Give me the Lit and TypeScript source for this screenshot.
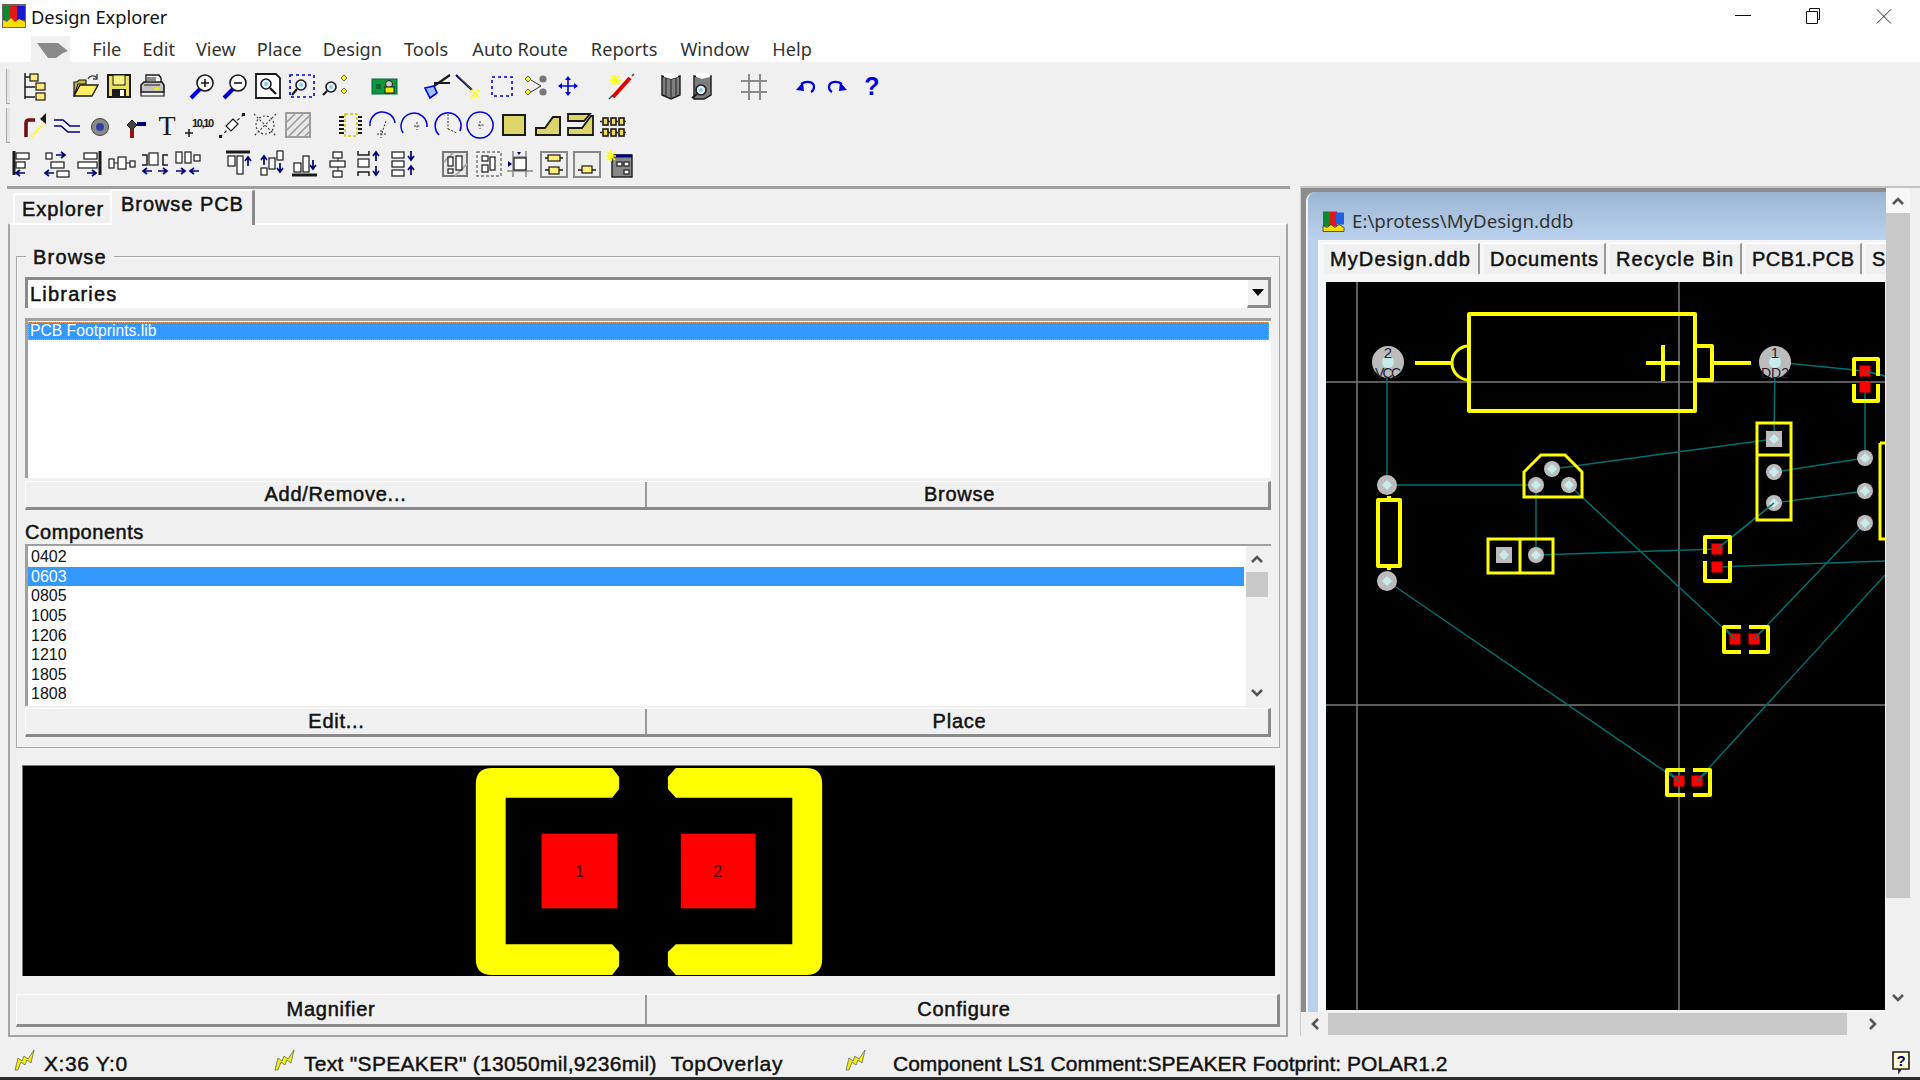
import { LitElement, html, css, svg } from "lit";
import { customElement } from "lit/decorators.js";

const Y = "#ffff00";
const BLUE = "#0000e0";
const NAVY = "#00007b";
const INK = "#1a1a1a";

// toolbar glyphs, all in a 28x28 box
const lens = (x: number, y: number, r = 6) => svg`<circle cx=${x} cy=${y} r=${r} fill="#eef" stroke=${INK} stroke-width="1.6"/><circle cx=${x} cy=${y} r=${r - 3} fill="#7cd6d6"/>`;
const chip = (x: number, y: number, w: number, h: number, f = "#fff") => svg`<rect x=${x} y=${y} width=${w} height=${h} fill=${f} stroke=${INK} stroke-width="1.2"/>`;
const arrowL = (x: number, y: number, c = NAVY) => svg`<path d="M${x} ${y}h9M${x + 4} ${y - 3}l-4 3 4 3" fill="none" stroke=${c} stroke-width="1.7"/>`;
const arrowR = (x: number, y: number, c = NAVY) => svg`<path d="M${x} ${y}h9M${x + 5} ${y - 3}l4 3-4 3" fill="none" stroke=${c} stroke-width="1.7"/>`;
const arrowU = (x: number, y: number, c = NAVY) => svg`<path d="M${x} ${y}v9M${x - 3} ${y + 4}l3-4 3 4" fill="none" stroke=${c} stroke-width="1.7"/>`;
const arrowD = (x: number, y: number, c = NAVY) => svg`<path d="M${x} ${y}v9M${x - 3} ${y + 5}l3 4 3-4" fill="none" stroke=${c} stroke-width="1.7"/>`;
const arc = (d: string, m: string) => svg`<path d=${d} fill="none" stroke=${BLUE} stroke-width="1.5"/><path d=${m} fill="none" stroke="#333" stroke-width="1" stroke-dasharray="2 1.5"/>`;

const ICONS: Record<string, unknown> = {
  tree: svg`<path d="M4 1v26M4 5h6M4 15h10M4 25h10" stroke=${INK} stroke-width="1.5" fill="none"/>${chip(9, 2, 8, 7, "#ffe97a")}${chip(15, 11, 9, 7, "#ffe97a")}${chip(15, 21, 9, 7, "#ffe97a")}`,
  open: svg`<path d="M2 24V10h3l2-2h7v4h-8z" fill="#c9b53a" stroke=${INK} stroke-width="1.2"/><path d="M2 24l6-11h18l-6 11z" fill="#ffee66" stroke=${INK} stroke-width="1.4"/><path d="M16 7c2-4 7-4 9-1M25 2v5h-4" fill="none" stroke="#444" stroke-width="1.4"/>`,
  save: svg`<rect x="3" y="3" width="22" height="22" fill="#e8e060" stroke=${INK} stroke-width="2"/><rect x="8" y="3" width="12" height="10" fill="#f5f080" stroke=${INK} stroke-width="1"/><rect x="7" y="17" width="14" height="8" fill=${INK}/><rect x="15" y="18" width="4" height="6" fill="#fff"/>`,
  print: svg`<path d="M8 10V3h13l2 3v4" fill="#fff" stroke=${INK} stroke-width="1.4"/><path d="M3 20v-7l3-3h18l2 3v7z" fill="#c4c4c4" stroke=${INK} stroke-width="1.6"/><path d="M3 20v4h23v-4M6 13h16M9 6h9M9 8h9" stroke=${INK} fill="none" stroke-width="1.2"/><rect x="16" y="16" width="5" height="2" fill="#ee0"/>`,
  zin: svg`<path d="M3 26l9-9" stroke=${BLUE} stroke-width="4"/><circle cx="17" cy="11" r="8" fill="#fff" stroke=${INK} stroke-width="1.6"/><path d="M13 11h8M17 7v8" stroke=${INK} stroke-width="1.6"/>`,
  zout: svg`<path d="M3 26l9-9" stroke=${BLUE} stroke-width="4"/><circle cx="17" cy="11" r="8" fill="#fff" stroke=${INK} stroke-width="1.6"/><path d="M13 11h8" stroke=${INK} stroke-width="1.6"/>`,
  zfit: svg`<path d="M2 2h20l4 4v20H2z" fill="#fff" stroke=${INK} stroke-width="1.8"/>${lens(12, 12, 5)}<path d="M16 16l6 6" stroke=${INK} stroke-width="2.4"/>`,
  zarea: svg`<rect x="2" y="3" width="24" height="22" fill="none" stroke=${BLUE} stroke-width="1.6" stroke-dasharray="3 3"/>${lens(13, 13, 5)}<path d="M9 17l-5 6" stroke=${INK} stroke-width="2.2"/>`,
  zsel: svg`${lens(10, 15, 5)}<path d="M6 19l-4 4" stroke=${INK} stroke-width="2.2"/><path d="M23 3l3 3-3 3-3-3zM23 16l3 3-3 3-3-3z" fill=${Y} stroke="#666" stroke-width="1"/>`,
  board: svg`<rect x="1" y="7" width="25" height="15" fill="#0a9a3a" stroke="#064" stroke-width="1"/><rect x="5" y="12" width="5" height="5" fill="#163"/><circle cx="18" cy="12" r="3.5" fill="#ccc" stroke=${INK}/><rect x="14" y="15" width="9" height="6" fill="#ee0" stroke=${INK}/>`,
  cut: svg`<path d="M27 3L11 14M27 11H11" stroke=${INK} stroke-width="2.2"/><path d="M2 16l9-2 3 7-7 5z" fill="#9bc0ff" stroke=${BLUE} stroke-width="1.6"/>`,
  wiper: svg`<path d="M3 3l16 15" stroke="#00007b" stroke-width="2.2"/><path d="M5 4l13 13" stroke="#555" stroke-width="1"/><path d="M18 18l8 8M26 18l-8 8" stroke=${Y} stroke-width="3" stroke-dasharray="2 1.5"/>`,
  rect: svg`<rect x="4" y="5" width="20" height="19" fill="none" stroke=${BLUE} stroke-width="1.6" stroke-dasharray="3 3"/>`,
  deselect: svg`<path d="M9 8l10 6-10 6" fill="none" stroke="#333" stroke-width="1"/><path d="M6 4l3 3-3 3-3-3zM6 17l3 3-3 3-3-3z" fill=${Y} stroke="#666"/><circle cx="21" cy="7" r="3.6" fill="#777"/><circle cx="21" cy="20" r="3.6" fill="#777"/>`,
  move: svg`<path d="M14 5v18M5 14h18" stroke=${BLUE} stroke-width="1.6"/><path d="M14 4l-3 4h6zM14 24l-3-4h6zM4 14l4-3v6zM24 14l-4-3v6z" fill=${BLUE}/>`,
  wand: svg`<path d="M7 25L24 6" stroke="#e00000" stroke-width="4"/><path d="M3 27l4-4M26 4l2-2" stroke="#444" stroke-width="1.5"/><path d="M9 3v10M3 8h12M5 4l8 8M13 4l-8 8" stroke=${Y} stroke-width="1.7"/>`,
  book: svg`<path d="M5 4l9 3 9-3v19l-9 4-9-4z" fill="#7e7e7e" stroke=${INK} stroke-width="1.4"/><path d="M14 7v20M9 6v18M19 6v18" stroke="#333" stroke-width="1.2"/><path d="M7 1h14v4l-7 2-7-2z" fill="#fff"/>`,
  bookz: svg`<path d="M6 4l8 2 9-2v19l-7 4H6z" fill="#7e7e7e" stroke=${INK} stroke-width="1.4"/><path d="M8 1h14v4l-8 2-6-2z" fill="#fff"/>${lens(13, 18, 5)}<path d="M9 22l-5 4" stroke=${INK} stroke-width="2.2"/>`,
  grid: svg`<path d="M9 2v26M20 2v26M1 9h26M1 20h26" stroke="#8a8a8a" stroke-width="2"/>`,
  undo: svg`<path d="M10 12c6-4 13-2 13 3 0 2-1 4-3 5" fill="none" stroke=${BLUE} stroke-width="2.2"/><path d="M5 18l8 1-1-9z" fill=${BLUE}/>`,
  redo: svg`<path d="M18 12c-6-4-13-2-13 3 0 2 1 4 3 5" fill="none" stroke=${BLUE} stroke-width="2.2"/><path d="M23 18l-8 1 1-9z" fill=${BLUE}/>`,
  help: svg`<text x="14" y="23" text-anchor="middle" font-family="Liberation Sans" font-weight="700" font-size="25" fill=${BLUE}>?</text>`,
  wire: svg`<path d="M6 26V12q0-3 3-3h6" fill="none" stroke="#7b1010" stroke-width="3.6"/><path d="M6 26V12" stroke=${INK} stroke-width="1" stroke-dasharray="1 2"/><path d="M11 26L24 12" stroke=${Y} stroke-width="2.5" stroke-dasharray="2 1.5"/><path d="M26 2l-6 6 6 5z" fill=${INK}/>`,
  bus: svg`<path d="M1 9h9l7 6h10M1 15h7l7 6h12" fill="none" stroke=${NAVY} stroke-width="1.6"/>`,
  via: svg`<circle cx="14" cy="16" r="8.5" fill="#8a8a8a" stroke="#444" stroke-width="1"/><circle cx="14" cy="16" r="4" fill="#3040a0"/>`,
  pad: svg`<path d="M13 9l5 5-5 5-5-5z" fill="#444" stroke=${INK}/><path d="M18 13h9" stroke=${NAVY} stroke-width="4"/><path d="M13 18v9" stroke="#9a1010" stroke-width="4"/>`,
  text: svg`<text x="14" y="24" text-anchor="middle" font-family="Liberation Serif" font-size="28" fill=${INK}>T</text>`,
  coord: svg`<path d="M0 22h8M4 18v8" stroke=${INK} stroke-width="1.5"/><text x="7" y="16" font-family="Liberation Sans" font-weight="700" font-size="11" textLength="22" fill=${INK}>10,10</text>`,
  dim: svg`<path d="M2 26L26 3" stroke=${INK} stroke-width="1.2" stroke-dasharray="3 3"/><path d="M15 8l5 5-7 7-5-5z" fill="#fff" stroke=${INK} stroke-width="1.2"/><rect x="1" y="24" width="3" height="3" fill=${INK}/><rect x="24" y="2" width="3" height="3" fill=${INK}/>`,
  keep: svg`<circle cx="14" cy="14" r="9" fill="none" stroke="#444" stroke-width="1.2" stroke-dasharray="2 2"/><path d="M3 3l22 22M25 3L3 25" stroke="#444" stroke-width="1.2" stroke-dasharray="2 2"/>`,
  hatch: svg`<rect x="2" y="2" width="24" height="24" fill="#e8e8e8" stroke="#888" stroke-width="1.6"/><path d="M3 11l8-8M3 19L19 3M5 25L25 5M13 25l12-12M21 25l4-4" stroke="#999" stroke-width="1.6"/>`,
  ic: svg`<rect x="9" y="3" width="12" height="22" fill="none" stroke="#c8c800" stroke-width="1.5" stroke-dasharray="3 2"/><path d="M3 6h5M3 10h5M3 14h5M3 18h5M3 22h5M22 6h4M22 10h4M22 14h4M22 18h4M22 22h4" stroke=${INK} stroke-width="2"/>`,
  arc1: arc("M2 15A12 12 0 0 1 27 12", "M14 22L18 10M9 23h9M13 19v8"),
  arc2: arc("M2 22A13 13 0 1 1 26 16", "M13 15h6M16 11v8"),
  arc3: arc("M5 24A13 13 0 1 1 26 20", "M14 3v15M14 18l9 4"),
  arc4: arc("M14 1a13 13 0 1 0 .1 0", "M12 14h7M14 10v8"),
  fill: svg`<rect x="3" y="4" width="22" height="20" fill="#dcd66a" stroke=${INK} stroke-width="2"/>`,
  poly: svg`<path d="M2 24V17h9l8-11h7v18z" fill="#dcd66a" stroke=${INK} stroke-width="2"/>`,
  split: svg`<path d="M2 3h22l-6 7H2z" fill="#dcd66a" stroke=${INK} stroke-width="1.8"/><path d="M2 24v-7h14l9-12h2v19z" fill="#dcd66a" stroke=${INK} stroke-width="1.8"/>`,
  array: svg`${[7, 18].map((y) => [4, 12, 20].map((x) => svg`<rect x=${x} y=${y} width="5" height="7" fill="#eed860" stroke=${INK} stroke-width="1.6"/>`))}<path d="M1 10.500h26M1 21.500h26" stroke=${INK} stroke-width="1.400" stroke-dasharray="2 6"/>`,
  alL: svg`<path d="M3 1v24" stroke=${INK} stroke-width="3"/>${chip(5, 3, 13, 6)}${chip(5, 12, 9, 6)}${arrowL(5, 23)}`,
  alCH: svg`${chip(3, 3, 6, 6)}${chip(8, 12, 13, 6)}${chip(14, 21, 12, 6)}${arrowR(13, 5)}${arrowL(2, 23)}`,
  alR: svg`<path d="M25 1v24" stroke=${INK} stroke-width="3"/>${chip(9, 3, 13, 6)}${chip(3, 12, 19, 6)}${arrowR(12, 23)}`,
  spH: svg`${chip(1, 9, 5, 9)}${chip(10, 7, 8, 12)}${chip(22, 11, 5, 6)}<path d="M6 13h4M18 13h4" stroke=${INK}/>`,
  spHp: svg`${chip(8, 3, 9, 12)}<path d="M1 5h5v10H1M27 5h-5v10h5" fill="none" stroke=${INK} stroke-width="1.5"/>${arrowL(2, 21)}${arrowR(17, 21)}`,
  spHm: svg`${chip(2, 2, 6, 11)}${chip(11, 2, 6, 11)}${chip(20, 5, 6, 6)}${arrowR(2, 21)}${arrowL(16, 21)}`,
  alT: svg`<path d="M1 2h24" stroke=${INK} stroke-width="3"/>${chip(3, 6, 7, 10)}${chip(12, 6, 6, 18)}${arrowU(23, 7)}`,
  alCV: svg`${chip(19, 1, 6, 9)}${chip(11, 8, 6, 11)}${chip(3, 18, 6, 7)}${arrowU(6, 6)}${arrowD(22, 13)}`,
  alB: svg`<path d="M1 25h25" stroke=${INK} stroke-width="3"/>${chip(3, 13, 7, 9)}${chip(12, 6, 6, 16)}${arrowD(22, 10)}`,
  spV: svg`${chip(9, 2, 9, 6)}${chip(6, 11, 15, 6)}${chip(9, 21, 9, 6)}<path d="M14 8v3M14 17v4" stroke=${INK}/>`,
  spVp: svg`<path d="M2 1v4h11V1M2 26v-4h11v4" fill="none" stroke=${INK} stroke-width="1.5"/>${chip(2, 9, 11, 8)}${arrowU(20, 2)}${arrowD(20, 16)}`,
  spVm: svg`${chip(2, 2, 12, 6)}${chip(2, 11, 12, 6)}${chip(2, 20, 12, 6)}${arrowD(21, 1)}${arrowU(21, 16)}`,
  gridBox: svg`<rect x="2" y="2" width="24" height="24" fill="#e8e8e8" stroke="#777" stroke-width="2"/><path d="M3 12l9-9M14 26L26 14" stroke="#aaa" stroke-width="2"/>${chip(7, 7, 5, 9)}${chip(15, 6, 6, 14)}${chip(7, 19, 5, 4)}`,
  gridDash: svg`<rect x="2" y="2" width="24" height="24" fill="none" stroke="#777" stroke-width="1.5" stroke-dasharray="3 2"/>${chip(7, 6, 6, 5)}${chip(15, 7, 5, 13)}${chip(7, 15, 6, 7)}`,
  snap: svg`<path d="M7 1v26M20 1v26M1 21h26M7 7h14" stroke="#888" stroke-width="1.5"/>${chip(8, 8, 12, 12)}<path d="M2 11l4 3-4 3zM11 2h4l-2 3z" fill=${NAVY}/>`,
  place2: svg`<rect x="1" y="2" width="26" height="25" fill="#eee" stroke="#888" stroke-width="2"/><path d="M5 8h18M5 20h18" stroke=${INK} stroke-width="1.5"/>${chip(8, 5, 12, 6, "#ffee77")}${chip(9, 17, 10, 7, "#ffee77")}`,
  place1: svg`<rect x="1" y="2" width="26" height="25" fill="#eee" stroke="#888" stroke-width="2"/><path d="M5 20h18" stroke=${INK} stroke-width="1.5"/>${chip(9, 16, 10, 7, "#ffee77")}`,
  spark: svg`<rect x="7" y="5" width="20" height="22" fill="#888" stroke=${INK} stroke-width="1.4"/><path d="M7 6h20" stroke=${NAVY} stroke-width="3"/>${chip(12, 12, 5, 4)}${chip(19, 12, 5, 4)}${chip(19, 20, 5, 4)}<path d="M6 0v11M1 6h10M2 2l8 8M10 2l-8 8" stroke=${Y} stroke-width="1.500"/>`,
};

// second value is the extra space before the button
const ROW1 = [["tree", 0], ["open", 18], ["save", 0], ["print", 0], ["zin", 17], ["zout", 0], ["zfit", 0], ["zarea", 1], ["zsel", 0], ["board", 17], ["cut", 19], ["wiper", -3], ["rect", 2], ["deselect", 1], ["move", -1], ["wand", 19], ["book", 18], ["bookz", -2], ["grid", 19], ["undo", 18], ["redo", 0], ["help", 1]] as const;
const ROW2 = [["wire", 0], ["bus", 0], ["via", 0], ["pad", 0], ["text", 1], ["coord", -1], ["dim", 0], ["keep", 0], ["hatch", 0], ["ic", 19], ["arc1", -1], ["arc2", 0], ["arc3", 0], ["arc4", -1], ["fill", 1], ["poly", 1], ["split", -1], ["array", 0]] as const;
const ROW3 = [["alL", 3], ["alCH", -1], ["alR", -1], ["spH", 0], ["spHp", 0], ["spHm", 0], ["alT", 18], ["alCV", 0], ["alB", 0], ["spV", 0], ["spVp", -1], ["spVm", 1], ["gridBox", 18], ["gridDash", 1], ["snap", -2], ["place2", 1], ["place1", 0], ["spark", -1]] as const;

const MENU = ["File", "Edit", "View", "Place", "Design", "Tools", "Auto Route", "Reports", "Window", "Help"];
const PARTS = ["0402", "0603", "0805", "1005", "1206", "1210", "1805", "1808"];
const DOC_TABS = ["MyDesign.ddb", "Documents", "Recycle Bin", "PCB1.PCB", "S"];

// board artwork, in screen pixels
const NETS = [
  [1387, 362, 1387, 485], [1387, 485, 1536, 485], [1536, 485, 1536, 555], [1552, 469, 1774, 439],
  [1569, 485, 1735, 639], [1536, 555, 1717, 549], [1717, 549, 1774, 503], [1717, 567, 1885, 561],
  [1774, 472, 1865, 458], [1774, 503, 1865, 491], [1775, 362, 1774, 439], [1775, 362, 1865, 371],
  [1865, 371, 1885, 376], [1865, 387, 1865, 458], [1754, 639, 1865, 523], [1387, 581, 1679, 781],
  [1697, 781, 1885, 575],
];
const DRILLS = [[1387, 485, 10], [1387, 581, 10], [1552, 469, 8], [1536, 485, 8], [1569, 485, 8], [1774, 472, 8], [1774, 503, 8], [1865, 458, 8], [1865, 491, 8], [1865, 523, 8], [1536, 555, 8]];
const REDS = [[1865, 371], [1865, 387], [1717, 549], [1717, 567], [1735, 639], [1754, 639], [1679, 781], [1697, 781]];
const OUTLINES = [
  "M1469 314H1695V411H1469Z", "M1695 346H1712V380H1695", "M1712 363H1751", "M1415 363H1453",
  "M1646 363H1680", "M1663 345V381",
  "M1378 500H1400V566H1378Z", "M1389 496V500M1389 566V570",
  "M1854 376V359H1878V376M1854 384V401H1878V384",
  "M1705 554V537H1730V554M1705 561V581H1730V561",
  "M1741 627H1724V652H1741M1749 627H1768V652H1749",
  "M1685 770H1667V795H1685M1693 770H1710V795H1693",
];
const THIN = [
  "M1469 346A17 17 0 0 0 1469 380",
  "M1524 497V472L1541 455H1565L1582 472V497Z",
  "M1757 423H1791V520H1757ZM1757 455H1791",
  "M1488 539H1553V573H1488ZM1520 539V573",
  "M1880 443V539H1885M1880 443H1885",
];

const chevron = (d: string) => html`<svg class="chev" viewBox="0 0 14 14"><path d=${d} fill="none" stroke="#555" stroke-width="2.600"/></svg>`;
const UP = "M2 10l5-5 5 5";
const DOWN = "M2 4l5 5 5-5";
const LEFT = "M10 2L5 7l5 5";
const RIGHT = "M4 2l5 5-5 5";

const flash = html`<svg class="flash" viewBox="0 0 22 22"><path d="M1 21L4 9l4 3 2-5 4 3 6-9-3 13-4-3-2 5-4-3-3 8z" fill="#f0f000" stroke="#666" stroke-width="0.800"/></svg>`;

@customElement("app-root")
export class AppRoot extends LitElement {
  static styles = css`
    :host { display: block; width: 1920px; height: 1080px; overflow: hidden; background: #f0f0f0; color: #111; font-family: "Liberation Sans", sans-serif; }
    .title { height: 30px; background: #fff; display: flex; align-items: center; }
    .logo { width: 24px; height: 24px; margin: 2px 0 0 2px; }
    .title-text { margin-left: 5px; padding-top: 3px; font: 18.300px "Noto Sans", sans-serif; color: #111; }
    .win { margin-left: auto; display: flex; padding-right: 5px; }
    .win svg { width: 70px; height: 30px; }
    .menu { height: 32px; box-sizing: border-box; padding-top: 5px; background: #fff; display: flex; align-items: center; gap: 21px; font: 18.200px "Noto Sans", sans-serif; color: #333; }
    .menu span:nth-child(7) { margin-left: 1px; }
    .menu span:nth-child(8) { margin-left: 3px; }
    .menu span:nth-child(9) { margin-left: 2px; }
    .menu span:nth-child(10) { margin-left: 2px; }
    .menu span:nth-child(11) { margin-left: 2px; }
    .dropper { width: 39px; height: 26px; margin: 1px 1.300px 0 31px; background: #f0f0f0; display: flex; justify-content: center; align-self: flex-start; }
    .dropper svg { width: 34px; height: 22px; }
    .tools { height: 124px; box-sizing: border-box; padding-top: 4px; position: relative; }
    .row { height: 39px; display: flex; align-items: center; padding-left: 18px; }
    .row.second { padding-left: 17px; }
    .row.third { padding-left: 5px; }
    .btn { width: 33px; height: 33px; display: flex; align-items: center; justify-content: center; flex: none; }
    .btn svg { width: 28px; height: 28px; overflow: visible; }
    .grip { position: absolute; left: 6px; width: 3px; height: 34px; background: #e4e4e4; border-left: 1px solid #aaa; border-bottom: 1px solid #aaa; }
    .main { display: flex; height: 854px; }
    .left { width: 1285px; margin-left: 7px; height: 851px; position: relative; }
    .left::before { content: ""; display: block; width: 1283px; height: 3px; background: #a0a0a0; }
    .tabs { height: 34px; display: flex; align-items: flex-end; position: relative; }
    .tab { font-size: 20px; -webkit-text-stroke: 0.500px #111; letter-spacing: 0.950px; }
    .t1 { width: 97px; height: 30px; margin-left: 6px; box-sizing: border-box; padding: 3px 0 0 7px; border-top: 2px solid #fff; border-left: 2px solid #fff; }
    .t2 { width: 145px; height: 36px; box-sizing: border-box; padding: 2px 0 0 9px; margin-bottom: -2px; border-top: 2px solid #fff; border-left: 2px solid #fff; border-right: 3px solid #8a8a8a; border-radius: 0 3px 0 0; background: #f0f0f0; z-index: 1; }
    .body { width: 1280px; height: 814px; margin-left: 1px; box-sizing: border-box; border: 2px solid #a4a4a4; border-top: 2px solid #fff; border-left: 2px solid #a4a4a4; padding: 0 6px; }
    .group { height: 492px; margin-top: 31px; box-sizing: border-box; border: 1px solid #a8a8a8; box-shadow: inset 1px 1px 0 #fff; padding: 20px 8px 0 8px; position: relative; }
    .legend { position: absolute; left: 9px; top: -11px; padding: 0 7px 0 7px; background: #f0f0f0; font-size: 20px; -webkit-text-stroke: 0.500px #111; letter-spacing: 1.200px; line-height: 22px; }
    .combo { height: 31px; box-sizing: border-box; background: #fff; border-top: 3px solid #8a8a8a; border-left: 3px solid #8a8a8a; display: flex; align-items: center; font-size: 20px; -webkit-text-stroke: 0.500px #111; letter-spacing: 1.200px; padding-left: 2px; position: relative; }
    .drop { margin-left: auto; width: 24px; height: 28px; background: #f0f0f0; box-sizing: border-box; border-right: 3px solid #8a8a8a; border-bottom: 3px solid #8a8a8a; border-left: 1px solid #fff; display: flex; align-items: center; justify-content: center; }
    .drop i { width: 0; height: 0; border: 6px solid transparent; border-top: 7px solid #000; border-bottom: 0; }
    .list { background: #fff; box-sizing: border-box; border-top: 3px solid #a0a0a0; border-left: 3px solid #a0a0a0; font-size: 16px; }
    .lib { height: 160px; margin-top: 10px; padding-top: 1px; }
    .lib div { height: 18px; margin-right: 2px; background: #3399ff; color: #fff; line-height: 18px; padding-left: 2px; box-sizing: border-box; outline: 1px dotted #e8a060; outline-offset: -1px; font-size: 15.700px; }
    .pair { display: grid; grid-template-columns: 1fr 1fr; height: 29px; box-sizing: border-box; border-bottom: 3px solid #8a8a8a; border-right: 3px solid #8a8a8a; border-top: 1px solid #fff; border-left: 1px solid #fff; font-size: 20px; -webkit-text-stroke: 0.500px #111; letter-spacing: 0.750px; }
    .pair span { text-align: center; line-height: 25px; box-sizing: border-box; min-width: 0; }
    .pair span:first-child { border-right: 2px solid #9a9a9a; }
    .pair span:last-child { padding-left: 4px; }
    .b1 { margin-top: 3px; }
    .b2 { margin-top: 2px; }
    .b2 span { line-height: 24px; }
    .b2 span:first-child { padding-left: 2px; }
    .label { height: 34px; line-height: 44px; font-size: 20px; -webkit-text-stroke: 0.500px #111; letter-spacing: 0.550px; }
    .parts { height: 162px; display: flex; border-top-width: 2px; }
    .rows { flex: 1; padding-top: 1px; }
    .rows div { height: 19.650px; line-height: 19.650px; padding-left: 3px; }
    .rows .sel { background: #3399ff; color: #fff; margin-right: 2px; }
    .vbar { width: 25px; box-sizing: border-box; background: #f0f0f0; display: flex; flex-direction: column; align-items: center; justify-content: space-between; padding: 6px 3px 6px 0; position: relative; }
    .vbar .thumb { position: absolute; top: 26px; left: 0; width: 22px; height: 25px; background: #c8c8c8; }
    .chev { width: 14px; height: 14px; display: block; }
    .preview { height: 211px; margin: 17px 5px 0 6px; }
    .preview svg { width: 100%; height: 100%; display: block; background: #000; box-sizing: border-box; border-top: 1px solid #777; border-left: 1px solid #777; }
    .p3 { height: 33px; margin-top: 18px; }
    .p3 span { line-height: 28px; }
    .right { margin-left: 8px; width: 620px; height: 851px; box-sizing: border-box; border-top: 2px solid #c4c4c4; display: grid; grid-template-columns: 586px 24px; grid-template-rows: 824px 24px; position: relative; }
    .frame { background: #8c8c8c; padding: 4px 0 0 5px; border-left: 1px solid #cfcfcf; box-sizing: border-box; min-width: 0; overflow: hidden; }
    .child { height: 820px; background: #b8d0ea; border-radius: 9px 0 0 0; border-left: 2px solid #f4f4f4; box-sizing: border-box; display: flex; flex-direction: column; overflow: hidden; }
    .caption { height: 48px; flex: none; box-sizing: border-box; padding: 16px 0 0 14px; background: linear-gradient(#9ab5d4, #bad2ec); display: flex; align-items: flex-start; font: 18.700px "Noto Sans", sans-serif; color: #333; line-height: 26px; gap: 6px; }
    .caption svg { width: 24px; height: 25px; }
    .doc { flex: 1; margin-left: 10px; background: #f6f6f6; padding: 3px 0 0 6px; overflow: hidden; }
    .doc-tabs { height: 31px; display: flex; white-space: nowrap; }
    .doc-tabs span { box-sizing: border-box; padding: 2px 0 0 6px; margin-right: 4px; background: #f0f0f0; border-right: 2px solid #999; border-top: 1px solid #fff; font-size: 20px; -webkit-text-stroke: 0.500px #111; letter-spacing: 0.850px; line-height: 26px; flex: none; }
    .doc-tabs span:nth-child(1) { width: 156px; letter-spacing: 1.100px; }
    .doc-tabs span:nth-child(2) { width: 122px; }
    .doc-tabs span:nth-child(3) { width: 132px; letter-spacing: 1.150px; }
    .doc-tabs span:nth-child(4) { width: 116px; letter-spacing: 0.450px; }
    .doc-tabs span:nth-child(5) { width: 40px; border-right: 0; }
    .canvas { display: block; width: 559px; height: 728px; margin: 8px 0 0 2px; background: #000; }
    .scroll { background: #f0f0f0; display: flex; flex-direction: column; align-items: center; position: relative; }
    .scroll .btn-up { width: 100%; height: 25px; background: #f8f8f8; display: flex; align-items: center; justify-content: center; }
    .scroll .thumb { width: 100%; height: 685px; background: #c8c8c8; }
    .scroll .down { margin-top: auto; margin-bottom: 7px; }
    .hbar { display: flex; align-items: center; background: #f0f0f0; border-left: 1px solid #cfcfcf; padding-left: 7px; box-sizing: border-box; }
    .hbar .track { width: 519px; height: 22px; background: #c8c8c8; margin-left: 6px; }
    .hbar .end { margin-left: 19px; }
    .status { height: 37px; display: flex; align-items: center; padding-top: 10px; box-sizing: border-box; font-size: 21px; -webkit-text-stroke: 0.450px #111; white-space: nowrap; }
    .flash { width: 22px; height: 22px; flex: none; margin-top: -7px; display: block; }
    .s1 { margin-left: 14px; }
    .s1 + span { margin-left: 8px; width: 230px; flex: none; letter-spacing: 0.600px; }
    .s2 { flex: none; }
    .s2 + span { margin-left: 8px; width: 541px; flex: none; display: flex; gap: 14px; letter-spacing: 0.300px; }
    .s2 + span b { font-weight: 400; }
    .s2 + span b + b { letter-spacing: 0.600px; }
    .s3 + span { margin-left: 26px; }
    .q { margin: -4px 9px 0 auto; width: 20px; height: 24px; }
    .foot { height: 3px; background: #2c2c2c; }
  `;

  private row(items: readonly (readonly [string, number])[]) {
    return items.map(([name, gap]) => html`<span class="btn" style="margin-left:${gap}px"><svg viewBox="0 0 28 28">${ICONS[name]}</svg></span>`);
  }

  private board() {
    return svg`
      <svg class="canvas" viewBox="1326 282 559 728" xmlns="http://www.w3.org/2000/svg">
        <path d="M1357 282V1010M1679 282V1010M1326 382H1885M1326 705H1885" stroke="#7a7a7a" stroke-width="1.500"/>
        ${NETS.map(([a, b, c, d]) => svg`<line x1=${a} y1=${b} x2=${c} y2=${d} stroke="#007070" stroke-width="1.500"/>`)}
        ${[[1388, 362], [1775, 362]].map(([x, y]) => svg`<circle cx=${x} cy=${y} r="16" fill="#bcbcbc"/><circle cx=${x} cy=${y} r="6" fill="#c8ecec"/>`)}
        <text x="1388" y="358" text-anchor="middle" font-family="Liberation Sans" font-size="15" fill="#223">2</text>
        <text x="1388" y="378" text-anchor="middle" font-family="Liberation Sans" font-size="14" fill="#223" textLength="26">VCC</text>
        <text x="1775" y="358" text-anchor="middle" font-family="Liberation Sans" font-size="15" fill="#223">1</text>
        <text x="1775" y="378" text-anchor="middle" font-family="Liberation Sans" font-size="14" fill="#223" textLength="28">DD2</text>
        ${DRILLS.map(([x, y, r]) => svg`<circle cx=${x} cy=${y} r=${r} fill="#bcbcbc"/><path d="M${x} ${y - 5}l5 5-5 5-5-5z" fill="#c8ecec"/>`)}
        ${[[1774, 439], [1504, 555]].map(([x, y]) => svg`<rect x=${x - 8} y=${y - 8} width="16" height="16" fill="#bcbcbc"/><path d="M${x} ${y - 5}l5 5-5 5-5-5z" fill="#c8ecec"/>`)}
        ${REDS.map(([x, y]) => svg`<rect x=${x - 5.5} y=${y - 5.5} width="11" height="11" fill="#ff0000"/>`)}
        ${[[1865, 371, 1885, 376], [1717, 549, 1774, 503], [1735, 639, 1725, 628], [1754, 639, 1765, 628], [1679, 781, 1668, 771], [1697, 781, 1708, 771]].map(([a, b, c, d]) => svg`<line x1=${a} y1=${b} x2=${c} y2=${d} stroke="#007070" stroke-width="1.500"/>`)}
        ${OUTLINES.map((d) => svg`<path d=${d} fill="none" stroke=${Y} stroke-width="4" stroke-linejoin="round"/>`)}
        ${THIN.map((d) => svg`<path d=${d} fill="none" stroke=${Y} stroke-width="3"/>`)}
      </svg>`;
  }

  render() {
    return html`
      <div class="title">
        <svg class="logo" viewBox="0 0 24 24">
          <rect width="24" height="24" fill="#666"/><rect x="1" y="2" width="7" height="14" fill="#0a8a2a"/><rect x="8" y="2" width="7" height="15" fill="#e01818"/><rect x="15" y="2" width="8" height="14" fill="#1818d0"/>
          <path d="M1 23V16l4 2 4-4 4 4 4-3 6 3v5z" fill="#f4e000"/>
        </svg>
        <span class="title-text">Design Explorer</span>
        <div class="win">
          <svg viewBox="0 0 70 30"><path d="M26 15.500H42" stroke="#111" stroke-width="1"/></svg>
          <svg viewBox="0 0 70 30"><path d="M27.500 11.500h11v12h-11zM30.500 11V8.500h10v11h-2" fill="none" stroke="#111" stroke-width="1"/></svg>
          <svg viewBox="0 0 70 30" style="width:66px"><path d="M29.500 9l15 15M44.500 9l-15 15" stroke="#222" stroke-width="1"/></svg>
        </div>
      </div>
      <div class="menu">
        <span class="dropper"><svg viewBox="0 0 34 22"><path d="M3 7H24L34 15L29 17L22 22H14Z" fill="#8a8a8a"/></svg></span>
        ${MENU.map((m) => html`<span>${m}</span>`)}
      </div>
      <div class="tools">
        <i class="grip" style="top:7px"></i><i class="grip" style="top:46px"></i>
        <div class="row">${this.row(ROW1)}</div>
        <div class="row second">${this.row(ROW2)}</div>
        <div class="row third">${this.row(ROW3)}</div>
      </div>
      <div class="main">
        <div class="left">
          <div class="tabs">
            <span class="tab t1">Explorer</span>
            <span class="tab t2">Browse PCB</span>
          </div>
          <div class="body">
            <div class="group">
              <span class="legend">Browse</span>
              <div class="combo">Libraries<span class="drop"><i></i></span></div>
              <div class="list lib"><div>PCB Footprints.lib</div></div>
              <div class="pair b1"><span>Add/Remove...</span><span>Browse</span></div>
              <div class="label">Components</div>
              <div class="list parts">
                <div class="rows">${PARTS.map((p, i) => html`<div class=${i === 1 ? "sel" : ""}>${p}</div>`)}</div>
                <div class="vbar">${chevron(UP)}<i class="thumb"></i>${chevron(DOWN)}</div>
              </div>
              <div class="pair b2"><span>Edit...</span><span>Place</span></div>
            </div>
            <div class="preview">
              <svg viewBox="23 765 1252 211">
                <path d="M619 767H491Q475 767 475 783V959Q475 975 491 975H612L619 966V952L612 944H505V797H612L619 788V776L612 767Z" fill=${Y}/>
                <path d="M668 776L676 767H807Q823 767 823 783V959Q823 975 807 975H676L668 966V952L676 944H793V797H676L668 788Z" fill=${Y}/>
                <rect x="541" y="833" width="76" height="75" fill="#ff0000"/><rect x="681" y="833" width="75" height="75" fill="#ff0000"/>
                <text x="579" y="877" text-anchor="middle" font-family="Liberation Sans" font-size="16" fill="#400">1</text>
                <text x="718" y="877" text-anchor="middle" font-family="Liberation Sans" font-size="16" fill="#400">2</text>
              </svg>
            </div>
            <div class="pair p3"><span>Magnifier</span><span>Configure</span></div>
          </div>
        </div>
        <div class="right">
          <div class="frame">
            <div class="child">
              <div class="caption">
                <svg viewBox="0 0 24 24"><rect x="1" y="3" width="7" height="15" fill="#0a8a2a"/><rect x="8" y="3" width="7" height="15" fill="#e01818"/><rect x="14" y="4" width="8" height="12" fill="#2060e0"/><path d="M1 23V17l4 2 4-3 4 3 4-3 5 3v4z" fill="#f4e000" stroke="#333" stroke-width="0.800"/></svg>
                <span>E:\\protess\\MyDesign.ddb</span>
              </div>
              <div class="doc">
                <div class="doc-tabs">${DOC_TABS.map((t) => html`<span>${t}</span>`)}</div>
                ${this.board()}
              </div>
            </div>
          </div>
          <div class="scroll">
            <div class="btn-up">${chevron(UP)}</div>
            <div class="thumb"></div>
            <div class="down">${chevron(DOWN)}</div>
          </div>
          <div class="hbar">${chevron(LEFT)}<i class="track"></i><span class="end">${chevron(RIGHT)}</span></div>
        </div>
      </div>
      <div class="status">
        <span class="s1">${flash}</span><span>X:36 Y:0</span>
        <span class="s2">${flash}</span><span><b>Text "SPEAKER" (13050mil,9236mil)</b><b>TopOverlay</b></span>
        <span class="s3">${flash}</span><span>Component LS1 Comment:SPEAKER Footprint: POLAR1.2</span>
        <svg class="q" viewBox="0 0 20 24"><path d="M2 2h16v17h-8l-2 3 0-3H2z" fill="#fffbd0" stroke="#222" stroke-width="1.600"/><text x="10" y="16" text-anchor="middle" font-family="Liberation Sans" font-weight="700" font-size="15" fill="#000080">?</text></svg>
      </div>
      <div class="foot"></div>
    `;
  }
}
